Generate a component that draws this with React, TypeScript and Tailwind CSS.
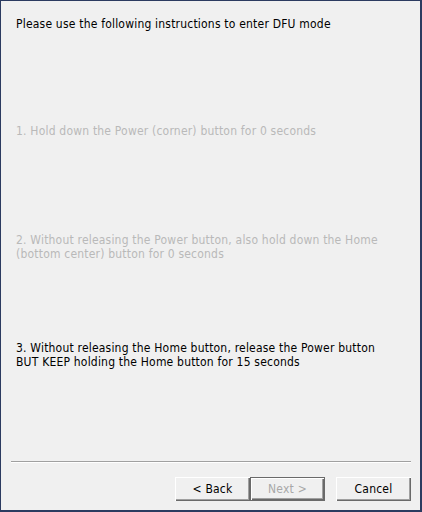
import React from "react";

const font = { fontFamily: '"DejaVu Sans Condensed", "DejaVu Sans", Tahoma, sans-serif' };

function WinButton({ label, disabled, isDefault }: { label: string; disabled?: boolean; isDefault?: boolean }) {
  const text = disabled
    ? "text-[#a8a8a8] text-[12px] leading-[14px] tracking-[0.2px]"
    : "text-black text-[12px] leading-[14px] tracking-[0.2px]";
  if (isDefault) {
    return (
      <div className="w-[75px] h-[24px] border border-[#6a6a6a] bg-[#f0f0f0] flex">
        <div className="flex-1 flex items-center justify-center shadow-[inset_1px_1px_0_#ffffff,inset_-1px_-1px_0_#6a6a6a,inset_-2px_-2px_0_#a0a0a0]">
          <span className={text}>{label}</span>
        </div>
      </div>
    );
  }
  return (
    <div className="w-[75px] h-[24px] bg-[#f0f0f0] flex items-center justify-center shadow-[inset_1px_1px_0_#ffffff,inset_-1px_-1px_0_#6a6a6a,inset_-2px_-2px_0_#a0a0a0]">
      <span className={text}>{label}</span>
    </div>
  );
}

export default function App() {
  return (
    <div
      style={font}
      className="w-[422px] h-[512px] bg-[#f0f0f0] border-t border-l border-r-2 border-b-2 border-[#2b3b60] flex flex-col text-[12px] leading-[14px] tracking-[0.2px]"
    >
      <div className="pl-[15px] pt-[16px] flex-1 flex flex-col">
        <div className="text-black">Please use the following instructions to enter DFU mode</div>
        <div className="mt-[93px] text-[#b9b9b9]">1. Hold down the Power (corner) button for 0 seconds</div>
        <div className="mt-[95px] text-[#b9b9b9]">
          <div>2. Without releasing the Power button, also hold down the Home</div>
          <div>(bottom center) button for 0 seconds</div>
        </div>
        <div className="mt-[80px] text-black">
          <div>3. Without releasing the Home button, release the Power button</div>
          <div>BUT KEEP holding the Home button for 15 seconds</div>
        </div>
      </div>
      <div className="ml-[10px] mr-[9px] h-[2px] border-t border-[#a0a0a0] border-b border-b-[#ffffff]" />
      <div className="flex justify-end pr-[9px] pt-[14px] pb-[9px]">
        <WinButton label="< Back" />
        <WinButton label="Next >" disabled isDefault />
        <div className="w-[11px]" />
        <WinButton label="Cancel" />
      </div>
    </div>
  );
}
